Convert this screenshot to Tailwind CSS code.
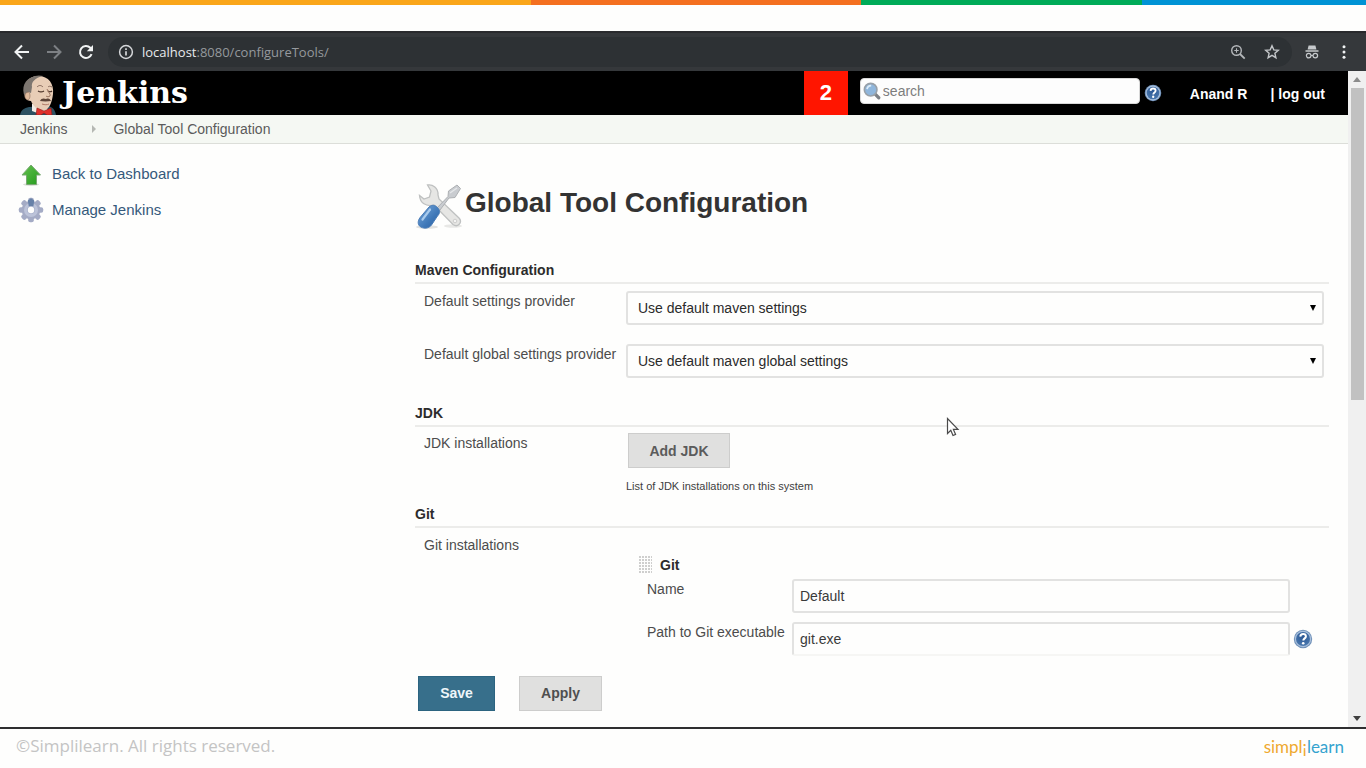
<!DOCTYPE html>
<html lang="en">
<head>
<meta charset="utf-8">
<title>Global Tool Configuration [Jenkins]</title>
<script src="https://cdn.jsdelivr.net/npm/@tailwindcss/browser@4"></script>
</head>
<body class="relative flex min-h-screen flex-col bg-[#fefefd] font-['Liberation_Sans',Arial,sans-serif] text-sm leading-5 text-[#4c4c4c]">

<svg class="absolute size-0">
  <defs>
    <radialGradient id="helpBlue" cx=".5" cy=".35" r=".65"><stop offset="0" stop-color="#2a5794"/><stop offset="1" stop-color="#4a78ae"/></radialGradient>
    <symbol id="help" viewBox="0 0 20 20">
      <circle cx="10" cy="10" r="9.2" fill="#6f90b8"/>
      <circle cx="10" cy="10" r="8.2" fill="#a9c0dc"/>
      <circle cx="10" cy="10" r="7" fill="url(#helpBlue)"/>
      <path d="M7.3 7.6C7.4 5.8 8.6 5 10.1 5c1.6 0 2.8.9 2.8 2.4 0 1.9-2.6 2.1-2.6 4.2" fill="none" stroke="#fff" stroke-width="2"/>
      <circle cx="10.2" cy="14.2" r="1.3" fill="#fff"/>
    </symbol>
  </defs>
</svg>

<!-- Slide stripe -->
<div class="flex h-[5px]">
  <div class="w-[38.9%] bg-[#faa61a]"></div>
  <div class="w-[24.1%] bg-[#f47020]"></div>
  <div class="w-[20.6%] bg-[#00ab58]"></div>
  <div class="flex-1 bg-[#0093d5]"></div>
</div>

<!-- Browser toolbar -->
<div class="mt-[26px] flex h-10 items-center border-t-2 border-[#292a2d] bg-[#35383b] pr-[14px] pl-3">
  <button aria-label="Back" class="size-5"><svg viewBox="0 0 20 20" class="size-5" fill="none" stroke="#f1f3f4" stroke-width="2"><path d="M17 10H4M10 3.5 3.5 10l6.5 6.5"/></svg></button>
  <button aria-label="Forward" class="ml-3 size-5"><svg viewBox="0 0 20 20" class="size-5" fill="none" stroke="#7d8084" stroke-width="2"><path d="M3 10h13M10 3.5l6.5 6.5-6.5 6.5"/></svg></button>
  <button aria-label="Reload" class="ml-3 size-5"><svg viewBox="0 0 20 20" class="size-5"><path d="M15.6 12.2A6 6 0 1 1 14.3 5.8L16 7.5" fill="none" stroke="#f1f3f4" stroke-width="2"/><path d="M17 3v6.2h-6.2z" fill="#f1f3f4"/></svg></button>
  <div class="ml-3 flex h-[30px] flex-1 items-center rounded-full bg-[#2d3134] pr-3 pl-[10px]">
    <svg viewBox="0 0 16 16" class="size-4" fill="none" stroke="#d5d7da"><circle cx="8" cy="8" r="6.4" stroke-width="1.5"/><path d="M8 7.2v4.3M8 4.3v1.6" stroke-width="1.7"/></svg>
    <div class="ml-2 flex-1 font-['Open_Sans',sans-serif] text-[13px] text-[#95999d]"><span class="text-[#e8eaed]">localhost</span>:8080/configureTools/</div>
    <button aria-label="Zoom" class="size-4"><svg viewBox="0 0 16 16" class="size-4" fill="none" stroke="#b4b7ba" stroke-width="1.4"><circle cx="6.5" cy="6.5" r="4.8"/><path d="m10 10 4.7 4.7" stroke-width="1.8"/><path d="M4.3 6.5h4.4M6.5 4.3v4.4" stroke-width="1.1"/></svg></button>
    <button aria-label="Bookmark" class="ml-[18px] size-4"><svg viewBox="0 0 16 16" class="size-4" fill="none" stroke="#c3c6c9" stroke-width="1.4"><path d="m8 1.8 1.8 4.1 4.5.4-3.4 3 1 4.4L8 11.4l-3.9 2.3 1-4.4-3.4-3 4.5-.4z"/></svg></button>
  </div>
  <svg viewBox="0 0 16 16" class="ml-3 size-4" fill="#c6c9cc"><path d="M4.6 1.5h6.8l1 4H3.6zM1.500 6.300h13v1.400h-13z"/><circle cx="4.700" cy="11.600" r="2.300" fill="none" stroke="#c6c9cc" stroke-width="1.200"/><circle cx="11.300" cy="11.600" r="2.300" fill="none" stroke="#c6c9cc" stroke-width="1.200"/><path d="M7 11h2v1H7z"/></svg>
  <button aria-label="Menu" class="ml-4 size-4"><svg viewBox="0 0 16 16" class="size-4" fill="#f1f3f4"><circle cx="8" cy="2.800" r="1.500"/><circle cx="8" cy="8" r="1.500"/><circle cx="8" cy="13.200" r="1.500"/></svg></button>
</div>

<div class="flex flex-1">
  <div class="flex min-w-0 flex-1 flex-col">
    <!-- Jenkins header -->
    <header class="flex h-11 items-center bg-black pr-[23px] pl-5 text-white">
      <a href="#" class="flex h-11 flex-1 items-end gap-[6px]">
        <svg viewBox="0 0 36 40" class="h-10 w-9">
          <path d="M0 40c1-5 4-7 9-8l19-1c5 1 7 4 8 9z" fill="#2d5262"/>
          <path d="M12 29h14l2 7-8 3-8-3z" fill="#f2ece4"/>
          <path d="M5 20C3 11 7 1 18 1c11 0 16 8 15 18-1 8-3 14-8 16-6 1-11-2-14-9-4 0-6-3-6-6z" fill="#e8cdb6"/>
          <path d="M5 22C1 13 4 4 15 1c3-1 6-.6 8 0C15 3 11 7 12 12l-1 6-3-1-1 5z" fill="#7d7670"/>
          <path d="M6 18c3-2 4 0 4 3s-2 5-4 3-1-5 0-6z" fill="#dfbb9e" stroke="#8b6c58" stroke-width=".6"/>
          <path d="M17 12c2-2 4-2 6 0M28 12c1-1 2-1 4 0" fill="none" stroke="#84685a"/>
          <path d="M18 16c2 1.300 4 1.300 6 0M28 16c1 1 3 1 4 0" fill="none" stroke="#4a3328" stroke-width="1.200"/>
          <path d="M27 14c1 3 4 5 3 7-1 1-3 1-4 0" fill="none" stroke="#9a7460"/>
          <path d="M20 26c1-3 4-3 6-2 3-1 4 0 5 2-3 .5-8 .5-11 0z" fill="#5c4438"/>
          <path d="M22 29c3 1 5 1 7 0" fill="none" stroke="#b07a66"/>
          <path d="m17 33 7 3 7-3 1 7h-5l-3-2-3 2h-5z" fill="#e0302a" stroke="#8c1a16" stroke-width=".6"/>
        </svg>
        <span class="pb-1 font-['DejaVu_Serif',serif] text-[30px] leading-9 font-bold">Jenkins</span>
      </a>
      <a href="#" class="flex h-11 w-11 items-center justify-center bg-[#ff1500] text-[22px] font-bold">2</a>
      <div class="mb-1 ml-3 flex h-[26px] w-[280px] items-center rounded border border-[#d8d8d8] bg-[#fdfdfd] pl-[2px]">
        <svg viewBox="0 0 20 20" class="size-[18px] shrink-0"><path d="m13 13 4.500 4.500" stroke="#7c8086" stroke-width="3.600" stroke-linecap="round"/><circle cx="8.500" cy="8.500" r="7" fill="#8fb6dc" stroke="#98a0a8" stroke-width="1.800"/><path d="M4.500 8c.4-2.600 2.200-4 4.600-4" stroke="#dcecf9" stroke-width="2" fill="none"/></svg>
        <input type="text" aria-label="Search" placeholder="search" class="ml-[2px] min-w-0 flex-1 text-sm text-[#333] outline-none placeholder:text-[#7d7d7d]">
      </div>
      <a href="#" aria-label="Search help" class="ml-1"><svg class="size-[18px]"><use href="#help"/></svg></a>
      <a href="#" class="ml-7 pt-[2px] font-bold">Anand R</a>
      <div class="ml-[23px] flex gap-1 pt-[2px] font-bold"><span>|</span><a href="#">log out</a></div>
    </header>

    <!-- Breadcrumbs -->
    <nav class="flex h-[29px] items-center border-b border-[#dcded9] bg-[#f5f8f3] pl-5 text-[#5b5b5b]">
      <a href="#">Jenkins</a>
      <svg viewBox="0 0 6 8" class="mr-4 ml-6 h-2 w-[6px]" fill="#b5b8b3"><path d="M1 0 5 4 1 8z"/></svg>
      <a href="#">Global Tool Configuration</a>
    </nav>

    <div class="flex flex-1">
      <aside class="w-[415px] shrink-0 pt-4 pl-[18px] text-[15px] text-[#35597b]">
        <a href="#" class="flex h-7 items-center gap-2">
          <svg viewBox="0 0 26 26" class="size-[26px]"><defs><linearGradient id="up" x2="1" y2="1"><stop offset="0" stop-color="#66c250"/><stop offset="1" stop-color="#239a1c"/></linearGradient></defs><ellipse cx="13" cy="23.500" rx="8" ry="1.500" fill="#d8ddd6"/><path d="M13 4 22.500 14H18.500v9.500h-10V14H4z" fill="url(#up)" stroke="#7aa873"/></svg>
          Back to Dashboard</a>
        <a href="#" class="mt-2 flex h-7 items-center gap-2">
          <svg viewBox="0 0 26 26" class="size-[26px]"><g fill="#a4abc5"><circle cx="13" cy="13" r="9.300"/><g id="teeth"><rect x="10.200" y=".8" width="5.600" height="24.400" rx="2"/><rect x=".8" y="10.200" width="24.400" height="5.600" rx="2"/></g><use href="#teeth" transform="rotate(45 13 13)"/></g><circle cx="13" cy="13" r="7" fill="#bcc3d9"/><path d="M9.800 3.500 13 1.300l3.200 2.200-.8 6h-4.600z" fill="#6781a8"/><circle cx="13" cy="13" r="4" fill="#aab3cd"/><circle cx="13" cy="13" r="3.200" fill="#fefefd"/></svg>
          Manage Jenkins</a>
      </aside>

      <main class="min-w-0 flex-1 pt-[37px] pr-[19px]">
        <h1 class="flex h-12 items-center gap-[2px] text-[28px] font-bold text-[#333]">
          <svg viewBox="0 0 48 48" class="size-12">
            <defs><linearGradient id="handle" x2="1" y2="1"><stop offset="0" stop-color="#78a9dc"/><stop offset=".6" stop-color="#3f78b8"/><stop offset="1" stop-color="#2c5f9f"/></linearGradient></defs>
            <ellipse cx="12" cy="46" rx="11" ry="1.800" fill="#e2e2e0"/><ellipse cx="38" cy="45" rx="9" ry="1.800" fill="#e8e8e6"/>
            <path d="M12.500 4c5-1 11 3 10.500 10l1 4 20 19c4 4.500-1.500 10-6 6.500L19 24c-8 2-14-2-14.500-9.500l4.500 3.500 5.500-2 1.500-6z" fill="#e6e6e4" stroke="#bfc1c1" stroke-width="1.300"/>
            <circle cx="40" cy="40" r="1.800" fill="#f4f4f3" stroke="#c4c4c4" stroke-width=".8"/>
            <path d="m21 28 12-12.500.5-5.500 8.500-6 3.500 3.500-5.500 9-6 .5L23.500 31z" fill="#c9ccd0" stroke="#adb0b3"/>
            <path d="m35 12 7-5" stroke="#e5e7e9" stroke-width="1.500"/>
            <path d="M14 26c3-2.500 6-2 8.500.5s3 5.500 0 8.500l-6 9c-3 4-8.500 4-12 1-2.500-3-1-6.500 1-9z" fill="url(#handle)" stroke="#4a7db8"/>
            <path d="M15 28.500 7.500 38.500" stroke="#a9cbed" stroke-width="2.200" stroke-linecap="round"/>
          </svg>
          <span class="pb-1">Global Tool Configuration</span>
        </h1>

        <section>
          <h2 class="mt-[31px] border-b-2 border-[#ececea] pb-[2px] font-bold text-[#2c2c2c]">Maven Configuration</h2>
          <div class="mt-[7px] grid grid-cols-[202px_1fr] gap-y-[19px] pr-[5px] pl-[9px]">
            <label for="settings" class="whitespace-nowrap">Default settings provider</label>
            <div class="relative">
              <select id="settings" class="h-[34px] w-full appearance-none rounded-[3px] border-2 border-[#e2e2e1] bg-[#fefefd] pl-[10px] text-[#2b2b2b]"><option>Use default maven settings</option></select>
              <svg viewBox="0 0 6 6" class="pointer-events-none absolute top-[14px] right-2 size-[6px]"><path d="M0 0h6L3 6z"/></svg>
            </div>
            <label for="global" class="whitespace-nowrap">Default global settings provider</label>
            <div class="relative">
              <select id="global" class="h-[34px] w-full appearance-none rounded-[3px] border-2 border-[#e2e2e1] bg-[#fefefd] pl-[10px] text-[#2b2b2b]"><option>Use default maven global settings</option></select>
              <svg viewBox="0 0 6 6" class="pointer-events-none absolute top-[14px] right-2 size-[6px]"><path d="M0 0h6L3 6z"/></svg>
            </div>
          </div>
        </section>

        <section>
          <h2 class="mt-[25px] border-b-2 border-[#ececea] pb-[2px] font-bold text-[#2c2c2c]">JDK</h2>
          <div class="mt-[6px] grid grid-cols-[202px_1fr] pl-[9px]">
            <span>JDK installations</span>
            <div>
              <button class="ml-[2px] block h-[35px] w-[102px] border border-[#cdcdcc] bg-[#e0e0df] font-bold text-[#5b5b5b]">Add JDK</button>
              <p class="mt-[10px] text-[11px] leading-4 text-[#3f3f3f]">List of JDK installations on this system</p>
            </div>
          </div>
        </section>

        <section>
          <h2 class="mt-[10px] border-b-2 border-[#ececea] pb-[2px] font-bold text-[#2c2c2c]">Git</h2>
          <div class="mt-[7px] grid grid-cols-[202px_1fr] pl-[9px]">
            <span>Git installations</span>
            <div class="pt-5 pr-5 pl-[13px]">
              <div class="flex h-5 items-center gap-2 font-bold text-[#2c2c2c]">
                <svg class="h-[18px] w-[13px]"><defs><pattern id="dots" width="3" height="3" patternUnits="userSpaceOnUse"><rect width="2" height="2" fill="#cfcfce"/></pattern></defs><rect width="13" height="18" fill="url(#dots)"/></svg>
                Git
              </div>
              <div class="mt-1 grid grid-cols-[145px_1fr_19px] gap-y-[9px] pl-2">
                <label for="gitname">Name</label>
                <input id="gitname" type="text" value="Default" class="h-[34px] rounded-[3px] border-2 border-[#e2e2e1] bg-[#fefefd] px-[6px] text-[#3a3a3a]">
                <span></span>
                <label for="gitpath" class="whitespace-nowrap">Path to Git executable</label>
                <input id="gitpath" type="text" value="git.exe" class="h-[34px] rounded-[3px] border-2 border-[#e2e2e1] border-b-[#f6f6f4] bg-[#fefefd] px-[6px] text-[#3a3a3a]">
                <a href="#" aria-label="Help for path to Git executable" class="ml-[3px] self-center"><svg class="size-5"><use href="#help"/></svg></a>
              </div>
            </div>
          </div>
        </section>

        <div class="mt-5 flex gap-6 pb-4 pl-[3px]">
          <button class="h-[35px] w-[77px] border border-[#2c6480] bg-[#376f8b] pb-[2px] font-bold text-[#eef6fa]">Save</button>
          <button class="h-[35px] w-[83px] border border-[#cdcdcc] bg-[#e0e0df] pb-[2px] font-bold text-[#4f4f4f]">Apply</button>
        </div>
      </main>
    </div>
  </div>

  <!-- Page scrollbar -->
  <div class="flex w-[18px] flex-col items-center bg-[#f0f0f0] pt-[6px] pb-[6px]">
    <svg viewBox="0 0 8 5" class="h-[5px] w-2" fill="#8b8b8b"><path d="M0 5 4 0l4 5z"/></svg>
    <div class="mt-[6px] h-[312px] w-[13px] bg-[#c1c1c1]"></div>
    <svg viewBox="0 0 8 5" class="mt-auto h-[5px] w-2" fill="#404040"><path d="M0 0h8L4 5z"/></svg>
  </div>
</div>

<footer class="flex h-[41px] items-center justify-between border-t-2 border-[#2e2e30] pr-[22px] pb-1 pl-4">
  <span class="pb-[2px] font-['Open_Sans',sans-serif] text-[17px] text-[#c4c4c4]">©Simplilearn. All rights reserved.</span>
  <a href="#" class="font-[Lato,sans-serif] text-[17px] text-[#35a3cf]"><span class="text-[#efa92f]">simpl¡</span>learn</a>
</footer>

<!-- Mouse pointer -->
<svg viewBox="0 0 14 20" class="pointer-events-none absolute top-[417px] left-[946px] h-5 w-[14px]"><path d="M1.500 1.500v15l3.300-3.200 2.200 5.200 2.600-1.100-2.200-5h4.600z" fill="#fff" stroke="#4a4a4a" stroke-width="1.200"/></svg>
</body>
</html>
